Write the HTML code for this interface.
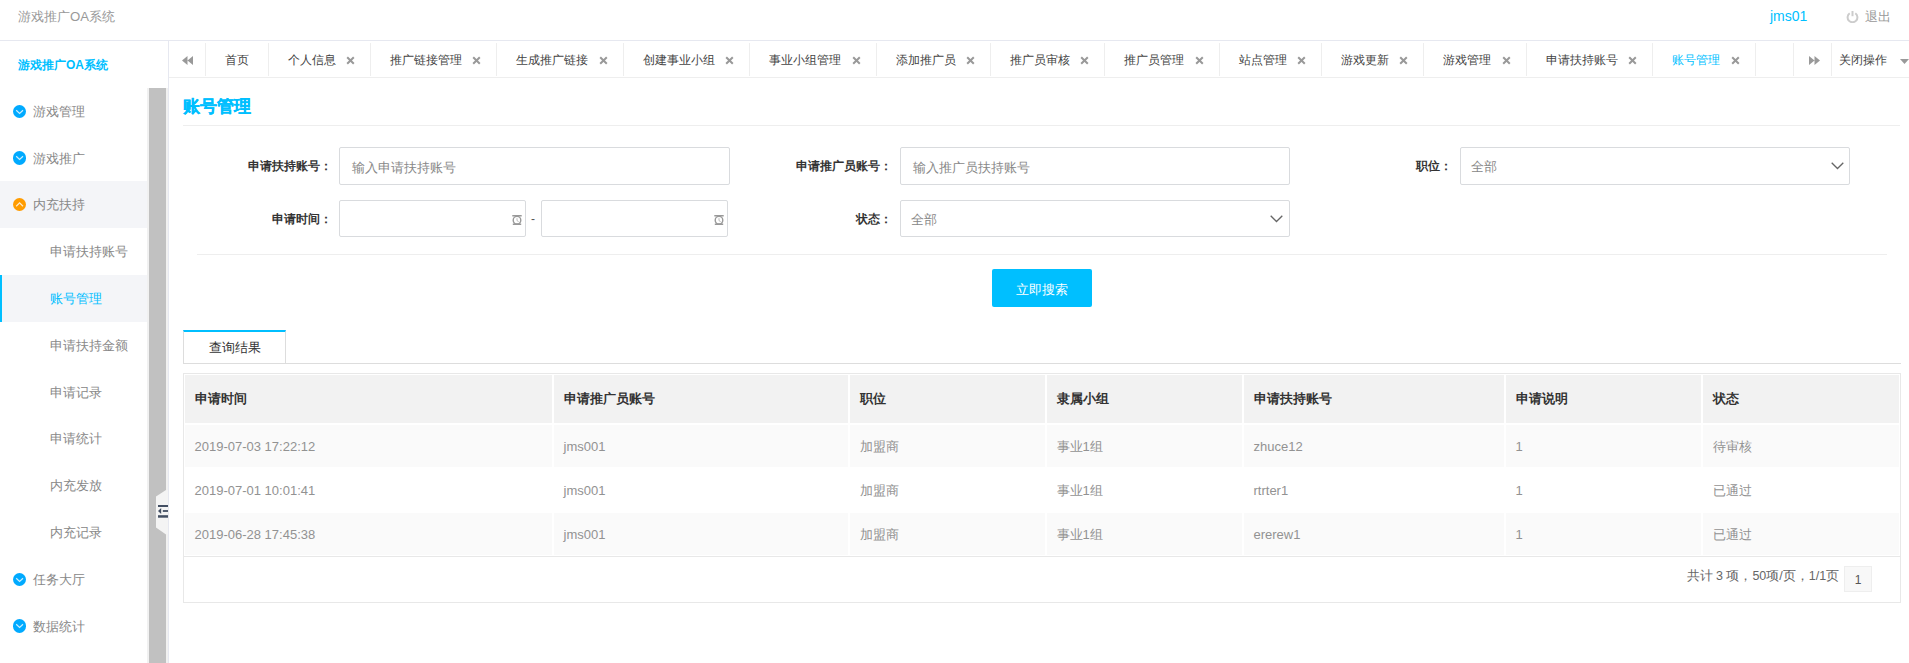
<!DOCTYPE html>
<html><head><meta charset="utf-8">
<style>
*{box-sizing:border-box;margin:0;padding:0}
html,body{width:1909px;height:663px;overflow:hidden;background:#fff;font-family:"Liberation Sans",sans-serif;}
.abs{position:absolute}
#hdr{left:0;top:0;width:1909px;height:41px;border-bottom:1px solid #e6e8f0}
#hdr .t{left:18px;top:7px;font-size:13.2px;line-height:20px;color:#999}
#hdr .u{left:1770px;top:6px;font-size:14px;line-height:20px;color:#00bfff}
#hdr .q{left:1865px;top:6.5px;font-size:13px;line-height:20px;color:#999}
#side{left:0;top:41px;width:169px;height:622px;border-right:1px solid #e6e8f0}
#side .ttl{left:18px;top:16px;font-size:12px;line-height:16px;color:#00bfff;font-weight:bold}
#track{left:147px;top:88px;width:21px;height:575px;background:#f1f1f1}
#thumb{left:149px;top:88px;width:17px;height:575px;background:#c1c1c1}
.mi{position:absolute;left:0;width:147px;height:46.8px;line-height:46.8px;padding-top:1px;font-size:13px;color:#888}
.mi.p{padding-left:33px}
.mi.c{padding-left:50px}
.mi.hl{background:#f4f5f8}
.mi.act{background:#f4f5f8;color:#00bfff;border-left:2px solid #00bfff;padding-left:48px}
.ic{position:absolute;left:13px;top:16.8px;width:13.3px;height:13.3px;border-radius:50%;background:#00aaff}
.ic.o{background:#ff9c00}
.ic svg{position:absolute;left:0;top:0}
#tabs{left:169px;top:41px;width:1740px;height:37px;border-bottom:1px solid #eee}
.tb{position:absolute;top:2px;height:33px;border-left:1px solid #eee;font-size:12px;line-height:35px;color:#444;white-space:nowrap}
.tb .x{position:absolute;top:0}
#main{left:169px;top:78px}
.tb .x{position:absolute;right:15.5px;top:13px}
.tb.act{color:#00bfff}


.ptitle{left:183px;top:95px;font-size:17px;line-height:24px;font-weight:bold;color:#00bfff;-webkit-text-stroke:0.25px #00bfff}
.lbl{font-size:12px;line-height:20px;font-weight:bold;color:#333;text-align:right}
.inp{border:1px solid #d9dbde;border-radius:2px;background:#fff}
.inp .ph{position:absolute;left:12px;top:10.5px;font-size:13px;line-height:18px;color:#888}
.inp .chev{position:absolute;right:6px;top:14px}
.inp .clk{position:absolute;left:172px;top:13.8px}
.btn{background:#00bfff;color:#fff;font-size:13px;line-height:42px;text-align:center;border-radius:2px}

.rtab{left:183px;top:330px;width:103px;height:34px;border:1px solid #ddd;border-top:2px solid #00bfff;border-bottom:0;background:#fff;font-size:13px;line-height:31px;color:#333;text-align:center}
.th{height:50px;border:1px solid #fff;background:#f2f2f2;padding-left:9.5px;font-size:13px;line-height:48px;font-weight:bold;color:#333;white-space:nowrap}
.td{height:44px;border:1px solid #fff;background:#fff;padding-left:9.5px;font-size:13px;line-height:44px;color:#929292;white-space:nowrap}
.td.odd{background:#fafafa}
.pg{left:1686.5px;top:567px;font-size:12.5px;line-height:18px;color:#666;white-space:nowrap}
.pbox{left:1844px;top:566px;width:28px;height:26px;border:1px solid #eee;background:#f8f8f8;font-size:12px;line-height:26px;text-align:center;color:#555}
</style></head><body>
<div id="hdr" class="abs">
  <div class="abs t">游戏推广OA系统</div>
  <div class="abs u">jms01</div>
  <svg class="abs" style="left:1845.5px;top:9.7px" width="13" height="13" viewBox="0 0 13 13"><path d="M3.7 3.3A4.9 4.9 0 1 0 9.3 3.3" fill="none" stroke="#ccc" stroke-width="2"/><line x1="6.5" y1="1" x2="6.5" y2="6.2" stroke="#ccc" stroke-width="2"/></svg>
  <div class="abs q">退出</div>
</div>
<div id="side" class="abs">
  <div class="abs ttl">游戏推广OA系统</div>
</div>
<div id="track" class="abs"></div>
<div id="thumb" class="abs"></div>
<svg class="abs" style="left:149px;top:488px" width="19" height="48" viewBox="0 0 19 48"><path d="M17 1.9L7 8.6V39.4L17 46.6H19V1.9Z" fill="#f4f4f4"/><g fill="#434f63"><rect x="9" y="17" width="10" height="2"/><rect x="9" y="27.2" width="10" height="2.5"/><rect x="13.8" y="22.1" width="5.2" height="1.8"/><path d="M9 23L12.2 20V26Z"/></g></svg>
<div id="menu" class="abs" style="left:0;top:87.8px;width:147px">
  <div class="mi p" style="top:0"><span class="ic"><svg width="13" height="13" viewBox="0 0 13 13"><path d="M3.2 5.2L6.6 8.4L10 5.2" fill="none" stroke="rgba(255,255,255,0.8)" stroke-width="1.2"/></svg></span>游戏管理</div>
  <div class="mi p" style="top:46.8px"><span class="ic"><svg width="13" height="13" viewBox="0 0 13 13"><path d="M3.2 5.2L6.6 8.4L10 5.2" fill="none" stroke="rgba(255,255,255,0.8)" stroke-width="1.2"/></svg></span>游戏推广</div>
  <div class="mi p hl" style="top:93.6px"><span class="ic o"><svg width="13" height="13" viewBox="0 0 13 13"><path d="M3.2 8.2L6.6 4.9L10 8.2" fill="none" stroke="rgba(255,255,255,0.8)" stroke-width="1.2"/></svg></span>内充扶持</div>
  <div class="mi c" style="top:140.4px">申请扶持账号</div>
  <div class="mi c act" style="top:187.2px">账号管理</div>
  <div class="mi c" style="top:234px">申请扶持金额</div>
  <div class="mi c" style="top:280.8px">申请记录</div>
  <div class="mi c" style="top:327.6px">申请统计</div>
  <div class="mi c" style="top:374.4px">内充发放</div>
  <div class="mi c" style="top:421.2px">内充记录</div>
  <div class="mi p" style="top:468px"><span class="ic"><svg width="13" height="13" viewBox="0 0 13 13"><path d="M3.2 5.2L6.6 8.4L10 5.2" fill="none" stroke="rgba(255,255,255,0.8)" stroke-width="1.2"/></svg></span>任务大厅</div>
  <div class="mi p" style="top:514.8px"><span class="ic"><svg width="13" height="13" viewBox="0 0 13 13"><path d="M3.2 5.2L6.6 8.4L10 5.2" fill="none" stroke="rgba(255,255,255,0.8)" stroke-width="1.2"/></svg></span>数据统计</div>
</div>
<div id="tabs" class="abs">
<div class="tb" style="left:0;width:36px;border-left:0"><svg style="position:absolute;left:12.5px;top:13px" width="11" height="9" viewBox="0 0 11 9"><path d="M0 4.5L5.5 0V9ZM5.5 4.5L11 0V9Z" fill="#999"/></svg></div>
<div class="tb" style="left:36px;width:63px;text-align:center">首页</div>
<div class="tb" style="left:99px;width:102px;padding-left:18.5px">个人信息<svg class="x" width="9" height="9" viewBox="0 0 9 9"><path d="M1.2 1.2L7.8 7.8M7.8 1.2L1.2 7.8" stroke="#999" stroke-width="2"/></svg></div>
<div class="tb" style="left:201px;width:126px;padding-left:18.5px">推广链接管理<svg class="x" width="9" height="9" viewBox="0 0 9 9"><path d="M1.2 1.2L7.8 7.8M7.8 1.2L1.2 7.8" stroke="#999" stroke-width="2"/></svg></div>
<div class="tb" style="left:327px;width:127px;padding-left:18.5px">生成推广链接<svg class="x" width="9" height="9" viewBox="0 0 9 9"><path d="M1.2 1.2L7.8 7.8M7.8 1.2L1.2 7.8" stroke="#999" stroke-width="2"/></svg></div>
<div class="tb" style="left:454px;width:126px;padding-left:18.5px">创建事业小组<svg class="x" width="9" height="9" viewBox="0 0 9 9"><path d="M1.2 1.2L7.8 7.8M7.8 1.2L1.2 7.8" stroke="#999" stroke-width="2"/></svg></div>
<div class="tb" style="left:580px;width:127px;padding-left:18.5px">事业小组管理<svg class="x" width="9" height="9" viewBox="0 0 9 9"><path d="M1.2 1.2L7.8 7.8M7.8 1.2L1.2 7.8" stroke="#999" stroke-width="2"/></svg></div>
<div class="tb" style="left:707px;width:114px;padding-left:18.5px">添加推广员<svg class="x" width="9" height="9" viewBox="0 0 9 9"><path d="M1.2 1.2L7.8 7.8M7.8 1.2L1.2 7.8" stroke="#999" stroke-width="2"/></svg></div>
<div class="tb" style="left:821px;width:114px;padding-left:18.5px">推广员审核<svg class="x" width="9" height="9" viewBox="0 0 9 9"><path d="M1.2 1.2L7.8 7.8M7.8 1.2L1.2 7.8" stroke="#999" stroke-width="2"/></svg></div>
<div class="tb" style="left:935px;width:115px;padding-left:18.5px">推广员管理<svg class="x" width="9" height="9" viewBox="0 0 9 9"><path d="M1.2 1.2L7.8 7.8M7.8 1.2L1.2 7.8" stroke="#999" stroke-width="2"/></svg></div>
<div class="tb" style="left:1050px;width:102px;padding-left:18.5px">站点管理<svg class="x" width="9" height="9" viewBox="0 0 9 9"><path d="M1.2 1.2L7.8 7.8M7.8 1.2L1.2 7.8" stroke="#999" stroke-width="2"/></svg></div>
<div class="tb" style="left:1152px;width:102px;padding-left:18.5px">游戏更新<svg class="x" width="9" height="9" viewBox="0 0 9 9"><path d="M1.2 1.2L7.8 7.8M7.8 1.2L1.2 7.8" stroke="#999" stroke-width="2"/></svg></div>
<div class="tb" style="left:1254px;width:103px;padding-left:18.5px">游戏管理<svg class="x" width="9" height="9" viewBox="0 0 9 9"><path d="M1.2 1.2L7.8 7.8M7.8 1.2L1.2 7.8" stroke="#999" stroke-width="2"/></svg></div>
<div class="tb" style="left:1357px;width:126px;padding-left:18.5px">申请扶持账号<svg class="x" width="9" height="9" viewBox="0 0 9 9"><path d="M1.2 1.2L7.8 7.8M7.8 1.2L1.2 7.8" stroke="#999" stroke-width="2"/></svg></div>
<div class="tb act" style="left:1483px;width:103px;padding-left:18.5px">账号管理<svg class="x" width="9" height="9" viewBox="0 0 9 9"><path d="M1.2 1.2L7.8 7.8M7.8 1.2L1.2 7.8" stroke="#999" stroke-width="2"/></svg></div>
<div class="tb" style="left:1586px;width:38px"></div>
<div class="tb" style="left:1624px;width:38px"><svg style="position:absolute;left:14.5px;top:13px" width="11" height="9" viewBox="0 0 11 9"><path d="M11 4.5L5.5 0V9ZM5.5 4.5L0 0V9Z" fill="#999"/></svg></div>
<div class="tb" style="left:1662px;width:80px;padding-left:7px">关闭操作<svg style="position:absolute;left:68px;top:15.5px" width="9" height="5" viewBox="0 0 9 5"><path d="M0 0H9L4.5 5Z" fill="#999"/></svg></div>
</div>

<div class="abs ptitle">账号管理</div>
<div class="abs" style="left:183px;top:125px;width:1717px;height:1px;background:#eee"></div>
<div class="abs lbl" style="left:202px;top:156px;width:130px">申请扶持账号：</div>
<div class="abs inp" style="left:339px;top:147px;width:391px;height:38px"><span class="ph">输入申请扶持账号</span></div>
<div class="abs lbl" style="left:762px;top:156px;width:130px">申请推广员账号：</div>
<div class="abs inp" style="left:900px;top:147px;width:390px;height:38px"><span class="ph">输入推广员扶持账号</span></div>
<div class="abs lbl" style="left:1322px;top:156px;width:130px">职位：</div>
<div class="abs inp" style="left:1460px;top:147px;width:390px;height:38px"><span class="ph" style="left:9.5px;top:9.8px">全部</span><svg class="chev" style="right:5px" width="13" height="8" viewBox="0 0 13 8"><path d="M0.7 0.7L6.5 6.5L12.3 0.7" fill="none" stroke="#666" stroke-width="1.3"/></svg></div>
<div class="abs lbl" style="left:202px;top:209px;width:130px">申请时间：</div>
<div class="abs inp" style="left:339px;top:200px;width:187px;height:37px"><svg class="clk" width="10" height="10" viewBox="0 0 10 10"><path d="M0.3 0.8H9.7M0.8 9.3H9.2" stroke="#999" stroke-width="1.5"/><circle cx="5" cy="5.2" r="3.8" fill="none" stroke="#999" stroke-width="1.4"/><path d="M5 3.2V5.6L6.6 6.6" fill="none" stroke="#bbb" stroke-width="1"/></svg></div>
<div class="abs" style="left:531px;top:209px;font-size:12px;line-height:20px;color:#555">-</div>
<div class="abs inp" style="left:541px;top:200px;width:187px;height:37px"><svg class="clk" width="10" height="10" viewBox="0 0 10 10"><path d="M0.3 0.8H9.7M0.8 9.3H9.2" stroke="#999" stroke-width="1.5"/><circle cx="5" cy="5.2" r="3.8" fill="none" stroke="#999" stroke-width="1.4"/><path d="M5 3.2V5.6L6.6 6.6" fill="none" stroke="#bbb" stroke-width="1"/></svg></div>
<div class="abs lbl" style="left:762px;top:209px;width:130px">状态：</div>
<div class="abs inp" style="left:900px;top:200px;width:390px;height:37px"><span class="ph" style="left:9.5px;top:9.8px">全部</span><svg class="chev" width="13" height="8" viewBox="0 0 13 8"><path d="M0.7 0.7L6.5 6.5L12.3 0.7" fill="none" stroke="#666" stroke-width="1.3"/></svg></div>
<div class="abs" style="left:197px;top:254px;width:1690px;height:1px;background:#eee"></div>
<div class="abs btn" style="left:992px;top:269px;width:100px;height:38px">立即搜索</div>
<div class="abs rtab">查询结果</div>
<div class="abs" style="left:183px;top:363px;width:1718px;height:1px;background:#ddd"></div>
<div class="abs" style="left:183px;top:373px;width:1718px;height:230px;border:1px solid #e8e8e8"></div>
<div class="abs" style="left:184px;top:556px;width:1716px;height:1px;background:#e8e8e8"></div>
<div class="abs th" style="left:184px;top:374px;width:369px">申请时间</div>
<div class="abs th" style="left:553px;top:374px;width:296px">申请推广员账号</div>
<div class="abs th" style="left:849px;top:374px;width:197px">职位</div>
<div class="abs th" style="left:1046px;top:374px;width:197px">隶属小组</div>
<div class="abs th" style="left:1243px;top:374px;width:262px">申请扶持账号</div>
<div class="abs th" style="left:1505px;top:374px;width:197px">申请说明</div>
<div class="abs th" style="left:1702px;top:374px;width:198px">状态</div>
<div class="abs td odd" style="left:184px;top:424px;width:369px">2019-07-03 17:22:12</div>
<div class="abs td odd" style="left:553px;top:424px;width:296px">jms001</div>
<div class="abs td odd" style="left:849px;top:424px;width:197px">加盟商</div>
<div class="abs td odd" style="left:1046px;top:424px;width:197px">事业1组</div>
<div class="abs td odd" style="left:1243px;top:424px;width:262px">zhuce12</div>
<div class="abs td odd" style="left:1505px;top:424px;width:197px">1</div>
<div class="abs td odd" style="left:1702px;top:424px;width:198px">待审核</div>
<div class="abs td" style="left:184px;top:468px;width:369px">2019-07-01 10:01:41</div>
<div class="abs td" style="left:553px;top:468px;width:296px">jms001</div>
<div class="abs td" style="left:849px;top:468px;width:197px">加盟商</div>
<div class="abs td" style="left:1046px;top:468px;width:197px">事业1组</div>
<div class="abs td" style="left:1243px;top:468px;width:262px">rtrter1</div>
<div class="abs td" style="left:1505px;top:468px;width:197px">1</div>
<div class="abs td" style="left:1702px;top:468px;width:198px">已通过</div>
<div class="abs td odd" style="left:184px;top:512px;width:369px">2019-06-28 17:45:38</div>
<div class="abs td odd" style="left:553px;top:512px;width:296px">jms001</div>
<div class="abs td odd" style="left:849px;top:512px;width:197px">加盟商</div>
<div class="abs td odd" style="left:1046px;top:512px;width:197px">事业1组</div>
<div class="abs td odd" style="left:1243px;top:512px;width:262px">ererew1</div>
<div class="abs td odd" style="left:1505px;top:512px;width:197px">1</div>
<div class="abs td odd" style="left:1702px;top:512px;width:198px">已通过</div>
<div class="abs pg">共计 3 项，50项/页，1/1页</div>
<div class="abs pbox">1</div>
</body></html>
